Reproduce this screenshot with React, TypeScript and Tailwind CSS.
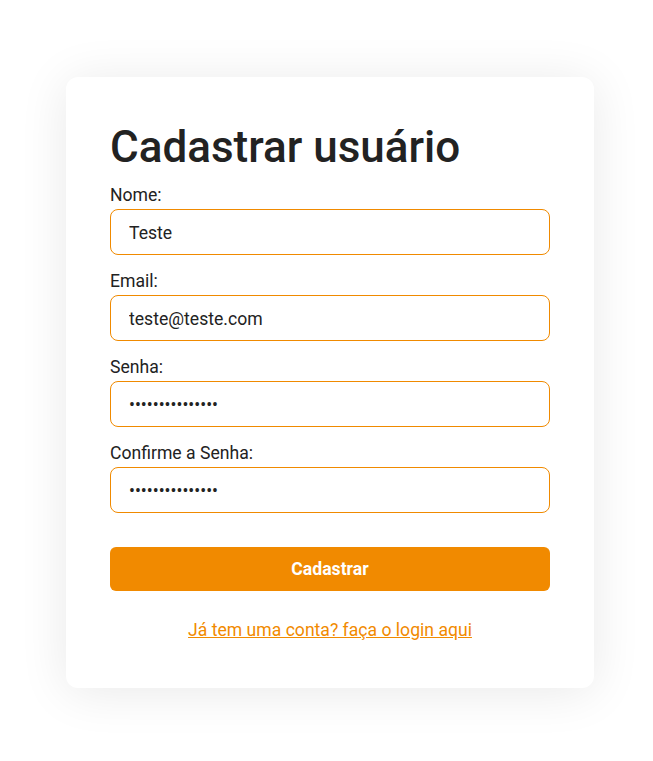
export default function App() {
  const fields = [
    { label: "Nome:", value: "Teste", type: "text" },
    { label: "Email:", value: "teste@teste.com", type: "email" },
    { label: "Senha:", value: "123456789012345", type: "password" },
    { label: "Confirme a Senha:", value: "123456789012345", type: "password" },
  ];

  return (
    <div
      className="min-h-screen bg-white pt-[77px] pl-[66px]"
      style={{ fontFamily: "Roboto, 'Noto Sans', sans-serif" }}
    >
      <div className="w-[528px] h-[611px] rounded-xl bg-white px-[44px] pt-[40px] shadow-[0_4px_50px_rgba(0,0,0,0.09)]">
        <h1 className="mb-[5px] text-[44px] leading-[60px] font-medium text-[#222]">Cadastrar usuário</h1>
        <form className="flex flex-col">
          {fields.map((f) => (
            <div key={f.label} className="mb-[13px] flex flex-col">
              <label className="text-[17.6px] leading-[27px] text-[#222]">{f.label}</label>
              <input
                type={f.type}
                defaultValue={f.value}
                className="h-[46px] w-full rounded-lg border border-[#f08a00] px-[18px] pt-[1px] text-[17.6px] text-[#222] outline-none"
              />
            </div>
          ))}
          <button
            type="button"
            className="mt-[21px] h-[44px] w-full rounded-md bg-[#f18a00] text-[17.6px] font-bold text-white"
          >
            Cadastrar
          </button>
          <div className="mt-[26px] text-center leading-[27px]">
            <a href="#" className="text-[17.6px] text-[#f18a00] underline">
              Já tem uma conta? faça o login aqui
            </a>
          </div>
        </form>
      </div>
    </div>
  );
}
